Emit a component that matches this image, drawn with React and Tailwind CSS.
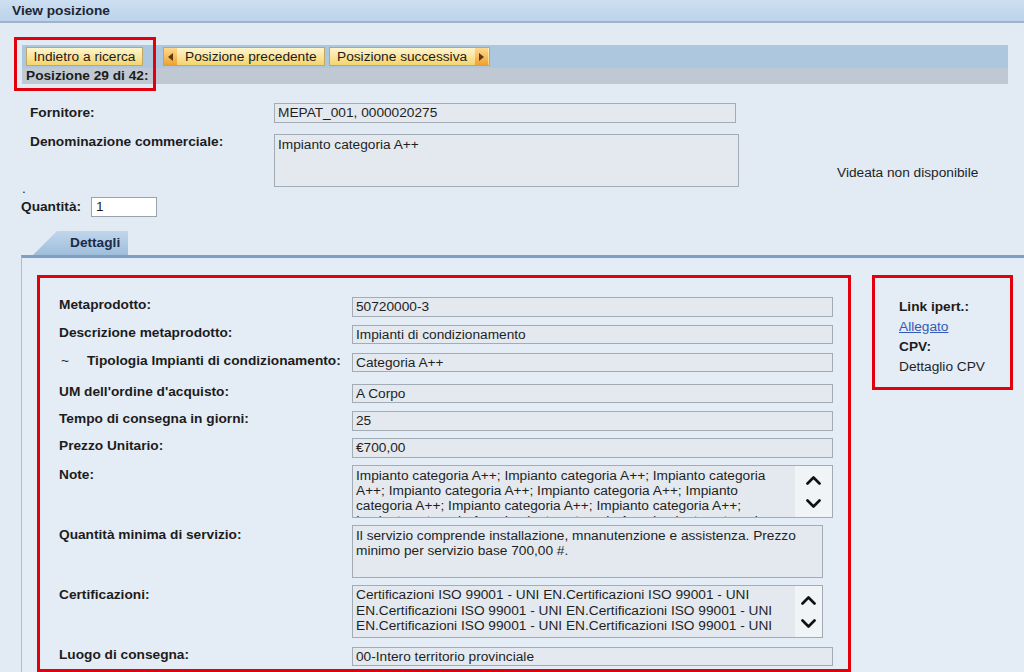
import React from "react";

const rows = [
  { label: "Metaprodotto:", value: "50720000-3", row: "mt-[19px]", box: "h-[20px]" },
  { label: "Descrizione metaprodotto:", value: "Impianti di condizionamento", row: "mt-[8px]", box: "h-[19px]" },
  { label: "Tipologia Impianti di condizionamento:", tilde: true, value: "Categoria A++", row: "mt-[9px]", box: "h-[19px]" },
  { label: "UM dell'ordine d'acquisto:", value: "A Corpo", row: "mt-[12px]", box: "h-[19px]" },
  { label: "Tempo di consegna in giorni:", value: "25", row: "mt-[8px]", box: "h-[20px]" },
  { label: "Prezzo Unitario:", value: "€700,00", row: "mt-[7px]", box: "h-[20px]" },
];

const note =
  "Impianto categoria A++; Impianto categoria A++; Impianto categoria A++; Impianto categoria A++; Impianto categoria A++; Impianto categoria A++; Impianto categoria A++; Impianto categoria A++; Impianto categoria A++; Impianto categoria A++; Impianto categoria A++;";

const cert =
  "Certificazioni ISO 99001 - UNI EN.Certificazioni ISO 99001 - UNI EN.Certificazioni ISO 99001 - UNI EN.Certificazioni ISO 99001 - UNI EN.Certificazioni ISO 99001 - UNI EN.Certificazioni ISO 99001 - UNI EN.";

function Chevron({ down }) {
  return (
    <svg width="15" height="9" viewBox="0 0 15 9">
      <polyline
        points={down ? "1.5,1.5 7.5,7.5 13.5,1.5" : "1.5,7.5 7.5,1.5 13.5,7.5"}
        fill="none"
        stroke="#111"
        strokeWidth="2.7"
        strokeLinecap="round"
        strokeLinejoin="round"
      />
    </svg>
  );
}

function Arrow({ right }) {
  return (
    <span className="flex items-center justify-center w-[13px] h-full bg-gradient-to-b from-[#ffd98a] to-[#f0a12c]">
      <svg width="5" height="8" viewBox="0 0 5 8">
        <polygon points={right ? "0,0 5,4 0,8" : "5,0 0,4 5,8"} fill="#5a3a10" />
      </svg>
    </span>
  );
}

function Field({ children, className }) {
  return (
    <div className={"flex items-center bg-[#e3e9ef] border border-[#a3abb5] pl-[3px] text-[#1f1f1f] " + className}>
      {children}
    </div>
  );
}

function ScrollBox({ text, width, textBox }) {
  return (
    <div className={"flex items-start h-[53px] bg-[#e3e9ef] border border-[#a3abb5] " + width}>
      <div className={"w-[442px] pr-[6px] pl-[3px] overflow-hidden text-[#1f1f1f] " + textBox}>{text}</div>
      <div className="self-stretch flex-1 flex flex-col items-center justify-center gap-[14px] bg-[#f1f4f7]">
        <Chevron />
        <Chevron down />
      </div>
    </div>
  );
}

export default function App() {
  return (
    <div className="relative w-[1024px] h-[672px] overflow-hidden bg-[#e2eaf4] text-[13.7px] leading-[16px] text-[#1c1c1c] font-['Liberation_Sans',Arial,sans-serif]">
      <div className="h-[23px] bg-gradient-to-b from-[#cddff1] to-[#bcd3ea] border-b-2 border-[#9fb3c9] pl-[12px] flex items-center font-bold text-[#1b2636]">
        View posizione
      </div>

      <div className="ml-[22px] mt-[22px] w-[986px]">
        <div className="h-[23px] bg-[#adc8de] flex items-start pt-[2px] pl-[4px]">
          <button className="h-[19px] w-[117px] flex items-center justify-center bg-gradient-to-b from-[#fff5cc] to-[#f5d46c] border border-[#bda866] text-[#1c1c1c]">
            Indietro a ricerca
          </button>
          <button className="ml-[20px] h-[19px] w-[162px] flex items-center bg-gradient-to-b from-[#fff5cc] to-[#f5d46c] border border-[#bda866] text-[#1c1c1c]">
            <Arrow />
            <span className="ml-[8px]">Posizione precedente</span>
          </button>
          <button className="ml-[4px] h-[19px] w-[161px] flex items-center justify-between bg-gradient-to-b from-[#fff5cc] to-[#f5d46c] border border-[#bda866] text-[#1c1c1c] pl-[7px] pr-[1px]">
            <span>Posizione successiva</span>
            <Arrow right />
          </button>
        </div>
        <div className="h-[16px] bg-[#c0c9d3] pl-[4px] font-bold leading-[16px]">Posizione 29 di 42:</div>
      </div>

      <div className="absolute left-[14px] top-[37px] w-[142px] h-[54px] border-[3px] border-[#e3000d]" />

      <div className="pl-[30px] mt-[19px] flex items-center">
        <div className="w-[244px] font-bold">Fornitore:</div>
        <Field className="w-[462px] h-[20px]">MEPAT_001, 0000020275</Field>
      </div>
      <div className="pl-[30px] mt-[11px] flex items-start">
        <div className="w-[244px] font-bold">Denominazione commerciale:</div>
        <div className="w-[465px] h-[53px] bg-[#e3e9ef] border border-[#a3abb5] pl-[3px] pt-[2px] text-[#1f1f1f]">
          Impianto categoria A++
        </div>
        <div className="ml-[98px] pt-[31px] text-[#1f1f1f]">Videata non disponibile</div>
      </div>
      <div className="pl-[22px] h-[10px] leading-[3px]">.</div>
      <div className="pl-[21px] flex items-center">
        <div className="w-[70px] font-bold">Quantità:</div>
        <div className="w-[66px] h-[20px] bg-white border border-[#9aa3ad] pl-[4px] flex items-center">1</div>
      </div>

      <div className="mt-[14px] pl-[33px]">
        <div className="w-[95px] h-[24px] bg-gradient-to-b from-[#c0d6ec] to-[#9fbedb] [clip-path:polygon(24px_0,100%_0,100%_100%,0_100%)] pl-[37px] flex items-center font-bold text-[#1a2a48]">
          Dettagli
        </div>
      </div>

      <div className="ml-[21px] h-[420px] border-t-[3px] border-t-[#7aa0c6] border-l border-l-[#a9bdd2] bg-[#e4ecf5] pl-[15px] pt-[17px] flex items-start">
        <div className="w-[814px] border-[3px] border-[#e3000d] pl-[19px] pb-[3px]">
          {rows.map((r) => (
            <div key={r.label} className={"flex items-start " + r.row}>
              <div className="w-[293px] font-bold flex">
                {r.tilde && <span className="w-[28px] pl-[2px] font-normal">~</span>}
                <span>{r.label}</span>
              </div>
              <Field className={"w-[481px] " + r.box}>{r.value}</Field>
            </div>
          ))}
          <div className="flex items-start mt-[7px]">
            <div className="w-[293px] font-bold pt-[2px]">Note:</div>
            <ScrollBox text={note} width="w-[481px]" textBox="h-[51px] pt-[2px] leading-[15px]" />
          </div>
          <div className="flex items-start mt-[7px]">
            <div className="w-[293px] font-bold pt-[2px]">Quantità minima di servizio:</div>
            <div className="w-[471px] h-[53px] bg-[#e3e9ef] border border-[#a3abb5] pl-[3px] pt-[2px] leading-[15px] text-[#1f1f1f]">
              Il servizio comprende installazione, mnanutenzione e assistenza. Prezzo minimo per servizio base 700,00 #.
            </div>
          </div>
          <div className="flex items-start mt-[7px]">
            <div className="w-[293px] font-bold pt-[2px]">Certificazioni:</div>
            <ScrollBox text={cert} width="w-[471px]" textBox="h-[48px] pt-[1px] leading-[15.5px]" />
          </div>
          <div className="flex items-start mt-[9px]">
            <div className="w-[293px] font-bold">Luogo di consegna:</div>
            <Field className="w-[481px] h-[19px]">00-Intero territorio provinciale</Field>
          </div>
        </div>

        <div className="ml-[21px] w-[141px] h-[115px] border-[3px] border-[#e3000d] pl-[24px] pt-[19px] leading-[20px]">
          <div className="font-bold">Link ipert.:</div>
          <div className="text-[#3559b8] underline">Allegato</div>
          <div className="font-bold">CPV:</div>
          <div className="text-[#1f1f1f]">Dettaglio CPV</div>
        </div>
      </div>
    </div>
  );
}
